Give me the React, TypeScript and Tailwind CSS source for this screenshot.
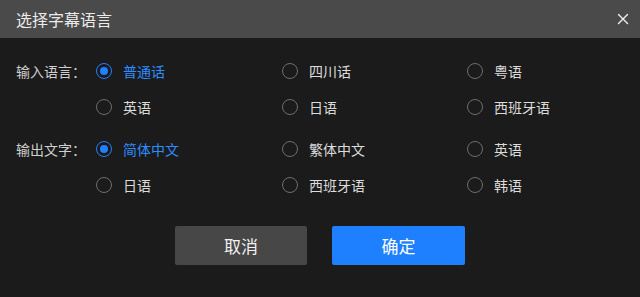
import React from "react";

type Opt = { label: string; selected?: boolean };

function Radio({ label, selected }: Opt) {
  return (
    <div className="flex items-center h-[36px]">
      {selected ? (
        <span className="w-[16px] h-[16px] rounded-full border border-[#2080ff] flex items-center justify-center shrink-0">
          <span className="w-[8px] h-[8px] rounded-full bg-[#2080ff]" />
        </span>
      ) : (
        <span className="w-[16px] h-[16px] rounded-full border border-[#6e6e6e] shrink-0" />
      )}
      <span
        className={
          "ml-[11px] text-[14px] leading-none whitespace-nowrap " +
          (selected ? "text-[#2d8cff]" : "text-[#dcdcdc]")
        }
      >
        {label}
      </span>
    </div>
  );
}

function Group({ title, options, className }: { title: string; options: Opt[]; className?: string }) {
  return (
    <div className={"flex " + (className ?? "")}>
      <div className="w-[96px] shrink-0 pl-4 h-[36px] flex items-center text-[14px] text-[#cfcfcf] leading-none whitespace-nowrap">
        {title}
      </div>
      <div className="grid grid-cols-[186px_185px_1fr] flex-1">
        {options.map((o, i) => (
          <Radio key={i} {...o} />
        ))}
      </div>
    </div>
  );
}

export default function App() {
  return (
    <div
      className="w-[640px] h-[297px] bg-[#1b1b1b] overflow-hidden flex flex-col"
      style={{ fontFamily: '"Noto Sans CJK SC", "Noto Sans", sans-serif' }}
    >
      <div className="h-[38px] bg-[#4a4a4a] flex items-center justify-between pl-4 pr-[11px] shrink-0">
        <span className="text-[16px] text-[#ececec] leading-none">选择字幕语言</span>
        <svg width="12" height="12" viewBox="0 0 12 12" className="text-[#f0f0f0]">
          <path d="M1.5 1.5 L10.5 10.5 M10.5 1.5 L1.5 10.5" stroke="currentColor" strokeWidth="1.4" strokeLinecap="round" />
        </svg>
      </div>
      <div className="pt-[15px]">
        <Group
          title="输入语言："
          options={[
            { label: "普通话", selected: true },
            { label: "四川话" },
            { label: "粤语" },
            { label: "英语" },
            { label: "日语" },
            { label: "西班牙语" },
          ]}
        />
        <Group
          className="mt-[6px]"
          title="输出文字："
          options={[
            { label: "简体中文", selected: true },
            { label: "繁体中文" },
            { label: "英语" },
            { label: "日语" },
            { label: "西班牙语" },
            { label: "韩语" },
          ]}
        />
        <div className="flex justify-center gap-[25px] mt-[23px]">
          <button className="w-[132px] h-[39px] rounded-[2px] bg-[#474747] text-[17px] text-[#f2f2f2]">
            取消
          </button>
          <button className="w-[133px] h-[39px] rounded-[2px] bg-[#1f80ff] text-[17px] text-white">
            确定
          </button>
        </div>
      </div>
    </div>
  );
}
